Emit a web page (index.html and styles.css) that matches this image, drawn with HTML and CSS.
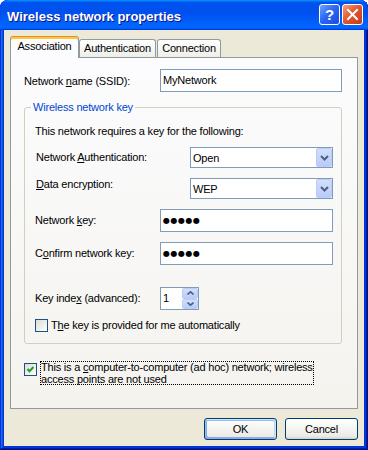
FILE: index.html
```html
<!DOCTYPE html>
<html lang="en">
  <head>
    <meta charset="UTF-8" />
    <title>Wireless network properties</title>
    <link rel="stylesheet" href="styles.css">
  </head>
  <body>
    <div class="window">
      <div class="titlebar">
        <span class="title">Wireless network properties</span>
        <span class="caption-btn help">?</span>
        <span class="caption-btn close">
          <svg width="19" height="19" viewBox="0 0 19 19">
            <path d="M5 5L14 14M14 5L5 14" stroke="#fff" stroke-width="2" stroke-linecap="square" />
          </svg>
        </span>
      </div>

      <div class="client">
        <div class="tabs">
          <span class="tab selected">Association</span>
          <span class="tab auth">Authentication</span>
          <span class="tab conn">Connection</span>
        </div>

        <div class="panel">
          <div class="name-row">
            <span>Network <u>n</u>ame (SSID):</span>
            <div class="textbox name-box">MyNetwork</div>
          </div>

          <fieldset class="group">
            <legend>Wireless network key</legend>
            <div class="group-body">
              <p class="intro">This network requires a key for the following:</p>

              <div class="field combo-row first">
                <span class="label">Network <u>A</u>uthentication:</span>
                <div class="combo">
                  <span>Open</span>
                  <span class="drop"><svg width="9" height="6" viewBox="0 0 9 6"><path d="M1 1L4.5 4.5L8 1" stroke="#4d6185" stroke-width="2" fill="none" /></svg></span>
                </div>
              </div>

              <div class="field combo-row">
                <span class="label raised"><u>D</u>ata encryption:</span>
                <div class="combo">
                  <span>WEP</span>
                  <span class="drop"><svg width="9" height="6" viewBox="0 0 9 6"><path d="M1 1L4.5 4.5L8 1" stroke="#4d6185" stroke-width="2" fill="none" /></svg></span>
                </div>
              </div>

              <div class="field text-row">
                <span class="label">Network <u>k</u>ey:</span>
                <div class="textbox key-box"><span class="dots">●●●●●</span></div>
              </div>

              <div class="field text-row">
                <span class="label">C<u>o</u>nfirm network key:</span>
                <div class="textbox key-box"><span class="dots">●●●●●</span></div>
              </div>

              <div class="field text-row index-row">
                <span class="label">Key inde<u>x</u> (advanced):</span>
                <div class="spin">
                  <span>1</span>
                  <span class="spin-btns">
                    <span class="spin-btn"><svg width="7" height="4" viewBox="0 0 7 4"><path d="M0.5 3.5L3.5 0.8L6.5 3.5" stroke="#4d6185" stroke-width="1.6" fill="none" /></svg></span>
                    <span class="spin-btn"><svg width="7" height="4" viewBox="0 0 7 4"><path d="M0.5 0.5L3.5 3.2L6.5 0.5" stroke="#4d6185" stroke-width="1.6" fill="none" /></svg></span>
                  </span>
                </div>
              </div>

              <div class="check-row auto-row">
                <span class="checkbox"></span>
                <span>T<u>h</u>e key is provided for me automatically</span>
              </div>
            </div>
          </fieldset>

          <div class="adhoc-row">
            <span class="checkbox checked">
              <svg width="11" height="11" viewBox="0 0 11 11"><path d="M2.5 5L4.5 7.2L8.5 3" stroke="#21a121" stroke-width="2" fill="none" /></svg>
            </span>
            <span class="focus-text">This is a <u>c</u>omputer-to-computer (ad hoc) network; wireless<br>access points are not used</span>
          </div>
        </div>

        <div class="buttons">
          <button class="btn default">OK</button>
          <button class="btn">Cancel</button>
        </div>
      </div>
    </div>
  </body>
</html>
```

FILE: styles.css
```css
* {
    box-sizing: border-box;
}

body {
    margin: 0;
    background: #fff;
    font-family: "Liberation Sans", Arial, sans-serif;
    font-size: 11px;
    letter-spacing: -0.2px;
    color: #000;
}

u {
    text-decoration-thickness: 1px;
}

/* window frame */
.window {
    width: 368px;
    height: 450px;
    display: flex;
    flex-direction: column;
    background: #0831d9;
    border-radius: 8px 8px 0 0;
    overflow: hidden;
    box-shadow: inset -1px -1px #00138c, inset 1px 1px #0831d9,
        inset -2px -2px #001ea0, inset 2px 2px #166aee,
        inset -3px -3px #003bda, inset 3px 3px #0855dd;
}

.titlebar {
    height: 30px;
    display: flex;
    align-items: flex-start;
    padding: 4px 5px 0 7px;
    border-radius: 8px 8px 0 0;
    background: linear-gradient(180deg, #0997ff, #0053ee 8%, #0050ee 40%, #06f 88%, #06f 93%, #005bff 95%, #003dd7 96%, #003dd7);
}

.title {
    flex: 1;
    margin-top: 5px;
    font-weight: bold;
    font-size: 13px;
    line-height: 15px;
    letter-spacing: 0;
    color: #fff;
    text-shadow: 1px 1px #0f1089;
}

.caption-btn {
    width: 21px;
    height: 21px;
    border: 1px solid #fff;
    border-radius: 3px;
    margin-left: 2px;
}

.help {
    background: linear-gradient(135deg, #6ea5ff, #2e66f5 45%, #1a4ddb);
    color: #fff;
    font-weight: bold;
    font-size: 15px;
    line-height: 19px;
    letter-spacing: 0;
    text-align: center;
}

.close {
    background: linear-gradient(135deg, #f3a282, #e2582f 45%, #c4391a);
}

.close svg {
    display: block;
}

/* client area */
.client {
    flex: 1;
    margin: 0 4px 4px;
    padding: 6px 6px 0;
    background: #ece9d8;
}

.tabs {
    display: flex;
    align-items: flex-end;
    height: 21px;
}

.tab {
    height: 18px;
    border: 1px solid #919b9c;
    border-bottom: 0;
    border-radius: 3px 3px 0 0;
    background: linear-gradient(180deg, #fff, #fafaf9 26%, #f0f0ea 95%, #ecebe6);
    line-height: 17px;
    text-align: center;
}

.tab.selected {
    width: 69px;
    height: 22px;
    margin-bottom: -1px;
    position: relative;
    z-index: 1;
    border-top: 1px solid #e68b2c;
    box-shadow: inset 0 2px #ffc83c;
    background: #fcfcfe;
    line-height: 16px;
    padding-top: 1px;
}

.tab.auth {
    width: 77px;
}

.tab.conn {
    width: 64px;
    margin-left: 1px;
}

.panel {
    height: 352px;
    border: 1px solid #919b9c;
    background: linear-gradient(180deg, #fcfcfe, #f4f3ee);
    padding: 11px 15px 0 13px;
}

.name-row {
    display: flex;
    align-items: center;
    height: 23px;
}

.textbox {
    height: 23px;
    border: 1px solid #7f9db9;
    background: #fff;
    padding-left: 2px;
    line-height: 21px;
}

.name-box {
    width: 182px;
    margin-left: auto;
}

.key-box {
    width: 173px;
}

.dots {
    font-family: "DejaVu Sans", sans-serif;
    font-size: 8px;
    letter-spacing: 0.5px;
    vertical-align: top;
}

/* group box */
.group {
    margin: 9px 0 0;
    padding: 0;
    min-width: 0;
    border: 1px solid #d0d0bf;
    border-radius: 3px;
}

.group legend {
    margin-left: 6px;
    padding: 0 2px;
    line-height: 12px;
    color: #0046d5;
}

.group-body {
    padding: 12px 8px 11px 10px;
}

.intro {
    margin: 0;
    line-height: 13px;
}

.field {
    display: flex;
    align-items: center;
    margin-top: 10px;
}

.field.first {
    margin-top: 9px;
}

.field .label {
    width: 125px;
    line-height: 13px;
}

.combo-row .label {
    width: 155px;
    padding-left: 1px;
}

.label.raised {
    align-self: flex-start;
}

.combo {
    width: 143px;
    height: 21px;
    border: 1px solid #7f9db9;
    background: #fff;
    display: flex;
    align-items: center;
    padding-left: 2px;
}

.drop {
    margin-left: auto;
    width: 16px;
    height: 19px;
    border: 1px solid #bacdf7;
    border-radius: 2px;
    background: linear-gradient(180deg, #d2defd, #b9cbf8);
    display: flex;
    align-items: center;
    justify-content: center;
}

.index-row {
    margin-top: 22px;
}

.spin {
    width: 39px;
    height: 23px;
    border: 1px solid #7f9db9;
    background: #fff;
    display: flex;
    padding-left: 2px;
    line-height: 21px;
}

.spin-btns {
    margin-left: auto;
    width: 16px;
    display: flex;
    flex-direction: column;
}

.spin-btn {
    flex: 1;
    border: 1px solid #bacdf7;
    border-radius: 2px;
    background: linear-gradient(180deg, #d2defd, #b9cbf8);
    display: flex;
    align-items: center;
    justify-content: center;
}

.checkbox {
    width: 13px;
    height: 13px;
    flex: none;
    border: 1px solid #1c5180;
    background: linear-gradient(135deg, #dcdcd7, #fff);
}

.checkbox svg {
    display: block;
}

.check-row {
    display: flex;
    align-items: center;
    gap: 3px;
    margin-top: 9px;
    line-height: 13px;
}

.adhoc-row {
    display: flex;
    align-items: flex-start;
    margin-top: 17px;
}

.adhoc-row .checkbox {
    margin-top: 2px;
    margin-right: 3px;
}

.focus-text {
    width: 274px;
    padding-left: 1px;
    line-height: 12px;
    white-space: nowrap;
    outline: 1px dotted #000;
    outline-offset: -1px;
}

/* dialog buttons */
.buttons {
    display: flex;
    justify-content: flex-end;
    gap: 8px;
    margin-top: 9px;
}

.btn {
    width: 73px;
    height: 22px;
    padding: 0;
    border: 1px solid #003c74;
    border-radius: 3px;
    background: linear-gradient(180deg, #fff, #ecebe6 86%, #d6d0c5);
    font-family: "Liberation Sans", Arial, sans-serif;
    font-size: 11px;
    letter-spacing: -0.2px;
    color: #000;
}

.btn.default {
    box-shadow: inset -1px 1px #cee7ff, inset 1px 2px #98b8ea,
        inset -2px 2px #bcd4f6, inset 1px -1px #89ade4, inset 2px -2px #89ade4;
}
```
